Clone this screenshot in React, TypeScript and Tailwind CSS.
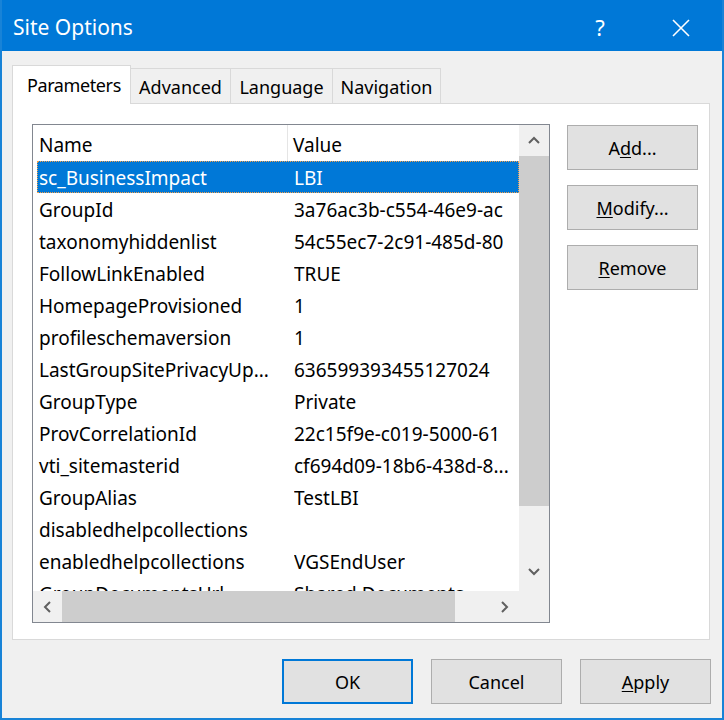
import React from "react";

const rows: [string, string][] = [
  ["sc_BusinessImpact", "LBI"],
  ["GroupId", "3a76ac3b-c554-46e9-ac"],
  ["taxonomyhiddenlist", "54c55ec7-2c91-485d-80"],
  ["FollowLinkEnabled", "TRUE"],
  ["HomepageProvisioned", "1"],
  ["profileschemaversion", "1"],
  ["LastGroupSitePrivacyUp...", "636599393455127024"],
  ["GroupType", "Private"],
  ["ProvCorrelationId", "22c15f9e-c019-5000-61"],
  ["vti_sitemasterid", "cf694d09-18b6-438d-8..."],
  ["GroupAlias", "TestLBI"],
  ["disabledhelpcollections", ""],
  ["enabledhelpcollections", "VGSEndUser"],
  ["GroupDocumentsUrl", "Shared Documents"],
];

function Chevron({ dir }: { dir: "up" | "down" | "left" | "right" }) {
  const paths: Record<string, string> = {
    up: "M1 7 L6 2 L11 7",
    down: "M1 2 L6 7 L11 2",
    left: "M7 1 L2 6 L7 11",
    right: "M2 1 L7 6 L2 11",
  };
  const vertical = dir === "up" || dir === "down";
  return (
    <svg
      width={vertical ? 12 : 9}
      height={vertical ? 9 : 12}
      viewBox={vertical ? "0 0 12 9" : "0 0 9 12"}
    >
      <path d={paths[dir]} fill="none" stroke="#606060" strokeWidth="2" />
    </svg>
  );
}

function Btn({ children, primary }: { children: React.ReactNode; primary?: boolean }) {
  return (
    <div
      className={
        "w-[131px] h-[45px] flex items-center justify-center bg-[#e1e1e1] text-[18px] text-black pt-[2px] " +
        (primary ? "border-2 border-[#0078d7]" : "border border-[#adadad]")
      }
    >
      {children}
    </div>
  );
}

export default function App() {
  return (
    <div className="w-[724px] h-[720px] bg-[#f0f0f0] border-x-2 border-b-2 border-[#1883d7] flex flex-col font-['Segoe_UI','Noto_Sans',sans-serif] text-black">
      {/* Title bar */}
      <div className="h-[51px] bg-[#0078d7] flex items-center text-white shrink-0">
        <div className="pl-[11px] text-[21px] leading-none pt-[4px]">Site Options</div>
        <div className="flex-1" />
        <div className="text-[22px] leading-none w-[20px] text-center mr-[62px] pt-[2px]">?</div>
        <svg width="18" height="18" viewBox="0 0 18 18" className="mr-[32px] mt-[4px]">
          <path d="M1 1 L17 17 M17 1 L1 17" stroke="white" strokeWidth="1.6" fill="none" />
        </svg>
      </div>

      {/* Tabs */}
      <div className="mt-[14px] ml-[10px] flex items-end h-[38px] text-[18px]">
        <div className="relative z-10 w-[119px] h-[39px] -mb-px bg-white border border-b-0 border-[#d9d9d9] flex items-center pl-[14px] tracking-[-0.4px]">
          Parameters
        </div>
        <div className="w-[100px] h-[35px] border-t border-r border-[#d9d9d9] flex items-center justify-center pt-[3px]">
          Advanced
        </div>
        <div className="w-[102px] h-[35px] border-t border-r border-[#d9d9d9] flex items-center justify-center pt-[3px]">
          Language
        </div>
        <div className="w-[108px] h-[35px] border-t border-r border-[#d9d9d9] flex items-center justify-center pt-[3px]">
          Navigation
        </div>
      </div>

      {/* Tab panel */}
      <div className="ml-[10px] w-[698px] h-[537px] bg-white border border-[#d9d9d9] flex pl-[19px] pt-[20px]">
        {/* List box */}
        <div className="w-[518px] h-[499px] border border-[#828790] flex flex-col text-[19px]">
          <div className="flex h-[466px]">
            <div className="w-[486px] h-[466px] overflow-hidden">
              <div className="relative h-[36px] flex items-center pt-[4px]">
                <div className="pl-[6px] w-[254px]">Name</div>
                <div className="w-px h-[36px] -mt-[4px] bg-[#e5e5e5]" />
                <div className="pl-[5px]">Value</div>
              </div>
              {rows.map(([n, v], i) => (
                <div
                  key={n}
                  className={
                    "ml-[4px] h-[32px] flex items-center whitespace-nowrap pt-[3px] " +
                    (i === 0
                      ? "bg-[#0078d7] text-white border border-dotted border-[#f5a04a] w-[482px]"
                      : "border border-transparent w-[482px]")
                  }
                >
                  <div className="pl-[1px] w-[256px] shrink-0 overflow-hidden">{n}</div>
                  <div className="overflow-hidden">{v}</div>
                </div>
              ))}
            </div>
            <div className="w-[30px] h-[466px] bg-[#f0f0f0] flex flex-col">
              <div className="h-[31px] flex items-center justify-center">
                <Chevron dir="up" />
              </div>
              <div className="h-[350px] bg-[#cdcdcd]" />
              <div className="flex-1" />
              <div className="h-[31px] flex items-center justify-center mb-[4px]">
                <Chevron dir="down" />
              </div>
            </div>
          </div>
          <div className="flex h-[31px] bg-[#f0f0f0]">
            <div className="w-[29px] flex items-center justify-center">
              <Chevron dir="left" />
            </div>
            <div className="w-[393px] bg-[#cdcdcd]" />
            <div className="w-[64px] flex items-center justify-center pl-[34px]">
              <Chevron dir="right" />
            </div>
            <div className="w-[30px]" />
          </div>
        </div>

        {/* Side buttons */}
        <div className="ml-[17px] pt-px flex flex-col gap-[15px]">
          <Btn>
            A<u className="underline-offset-2">d</u>d...
          </Btn>
          <Btn>
            <u className="underline-offset-2">M</u>odify...
          </Btn>
          <Btn>
            <u className="underline-offset-2">R</u>emove
          </Btn>
        </div>
      </div>

      {/* Bottom buttons */}
      <div className="mt-[19px] flex justify-end gap-[18px] pr-[11px]">
        <Btn primary>OK</Btn>
        <Btn>Cancel</Btn>
        <Btn>
          <u className="underline-offset-2">A</u>pply
        </Btn>
      </div>
    </div>
  );
}
